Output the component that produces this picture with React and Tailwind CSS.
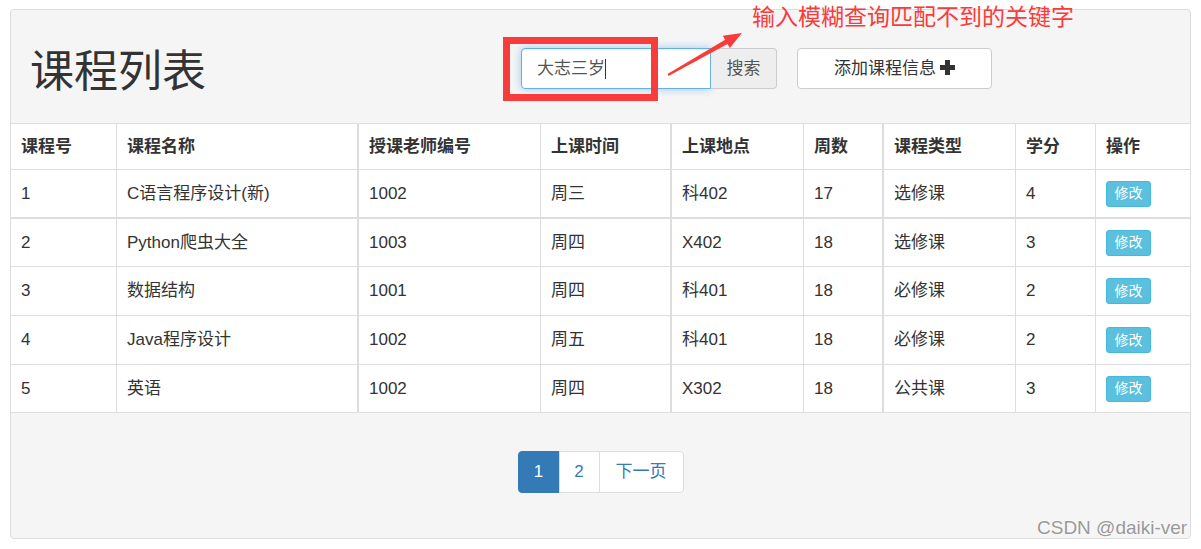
import React from "react";

const cols = [
  { w: "w-[106px]", b: "border-r" },
  { w: "w-[242px]", b: "border-r-2" },
  { w: "w-[182px]", b: "border-r" },
  { w: "w-[131px]", b: "border-r-2" },
  { w: "w-[132px]", b: "border-r" },
  { w: "w-[80px]", b: "border-r-2" },
  { w: "w-[132px]", b: "border-r" },
  { w: "w-[80px]", b: "border-r" },
  { w: "flex-1", b: "" },
];

const headers = ["课程号", "课程名称", "授课老师编号", "上课时间", "上课地点", "周数", "课程类型", "学分", "操作"];

const rows = [
  { h: "h-[47px]", b: "border-b-2", d: ["1", "C语言程序设计(新)", "1002", "周三", "科402", "17", "选修课", "4"] },
  { h: "h-[47px]", b: "border-b", d: ["2", "Python爬虫大全", "1003", "周四", "X402", "18", "选修课", "3"] },
  { h: "h-[48px]", b: "border-b", d: ["3", "数据结构", "1001", "周四", "科401", "18", "必修课", "2"] },
  { h: "h-[48px]", b: "border-b", d: ["4", "Java程序设计", "1002", "周五", "科401", "18", "必修课", "2"] },
  { h: "h-[47px]", b: "border-b", d: ["5", "英语", "1002", "周四", "X302", "18", "公共课", "3"] },
];

const font = { fontFamily: '"Liberation Sans", "Noto Sans CJK SC", sans-serif' };

function PlusIcon() {
  return (
    <svg width="15" height="15" viewBox="0 0 15 15" className="inline-block ml-[4px] -mt-[3px]">
      <rect x="5" y="0" width="5" height="15" fill="#333" />
      <rect x="0" y="5" width="15" height="5" fill="#333" />
    </svg>
  );
}

export default function App() {
  return (
    <div className="relative w-[1201px] h-[549px] bg-white pt-[9px] pl-[10px] text-[#333]" style={font}>
      <div className="w-[1181px] h-[530px] border border-[#ddd] rounded-[4px] bg-[#f5f5f5] flex flex-col overflow-hidden">
        {/* header */}
        <div className="h-[113px] flex items-center pl-[19px] shrink-0">
          <div className="w-[491px] text-[44px] leading-none font-normal text-[#333] mt-[10px]">课程列表</div>
          <div className="flex items-center mt-[4px]">
            <div className="w-[190px] h-[41px] bg-white border border-[#66afe9] rounded-l-[4px] flex items-center pl-[15px] text-[17px] text-[#555] shadow-[inset_0_1px_1px_rgba(0,0,0,0.075),0_0_8px_rgba(102,175,233,0.6)]">
              <span>大志三岁</span>
              <span className="inline-block w-px h-[20px] bg-[#333]" />
            </div>
            <div className="w-[66px] h-[41px] bg-[#eee] border border-l-0 border-[#ccc] rounded-r-[4px] flex items-center justify-center text-[17px] text-[#555]">
              搜索
            </div>
            <div className="ml-[20px] w-[195px] h-[41px] bg-white border border-[#ccc] rounded-[4px] flex items-center justify-center text-[17px] text-[#333]">
              <span>添加课程信息</span>
              <PlusIcon />
            </div>
          </div>
        </div>

        {/* table */}
        <div className="bg-white border-t border-[#ddd] text-[17px] shrink-0">
          <div className="flex h-[46px] border-b border-[#ddd] font-bold">
            {headers.map((h, i) => (
              <div key={i} className={`${cols[i].w} ${cols[i].b} border-[#ddd] flex items-center pl-[10px] shrink-0`}>
                {h}
              </div>
            ))}
          </div>
          {rows.map((r, ri) => (
            <div key={ri} className={`flex ${r.h} ${r.b} border-[#ddd] box-content`}>
              {r.d.map((c, i) => (
                <div key={i} className={`${cols[i].w} ${cols[i].b} border-[#ddd] flex items-center pl-[10px] shrink-0`}>
                  {c}
                </div>
              ))}
              <div className="flex-1 flex items-center pl-[10px]">
                <div className="w-[45px] h-[26px] bg-[#5bc0de] border border-[#46b8da] rounded-[3px] text-white text-[14px] flex items-center justify-center">
                  修改
                </div>
              </div>
            </div>
          ))}
        </div>

        {/* pagination */}
        <div className="flex justify-center pt-[38px]">
          <div className="flex text-[17px]">
            <div className="w-[42px] h-[42px] bg-[#337ab7] border border-[#337ab7] text-white rounded-l-[4px] flex items-center justify-center">1</div>
            <div className="w-[41px] h-[42px] -ml-px bg-white border border-[#ddd] text-[#337ab7] flex items-center justify-center">2</div>
            <div className="w-[85px] h-[42px] -ml-px bg-white border border-[#ddd] text-[#337ab7] rounded-r-[4px] flex items-center justify-center">下一页</div>
          </div>
        </div>
      </div>

      {/* annotations */}
      <div className="absolute left-[503px] top-[37px] w-[155px] h-[64px] border-[7px] border-[#f83c3c] pointer-events-none" />
      <svg className="absolute left-0 top-0 pointer-events-none" width="1201" height="549">
        <polygon
          points="667.5,74.1 725.1,39.7 722.8,35.8 742,33 729.8,48 727.5,44.1 668.5,75.9"
          fill="#f83c3c"
        />
      </svg>
      <div className="absolute left-[752px] top-[6px] text-[23px] leading-none text-[#f83c3c] whitespace-nowrap">
        输入模糊查询匹配不到的关键字
      </div>
      <div className="absolute left-[1037px] top-[518px] text-[19px] leading-none text-[#999] whitespace-nowrap [text-shadow:0_0_2px_#fff]">
        CSDN @daiki-ver
      </div>
    </div>
  );
}
